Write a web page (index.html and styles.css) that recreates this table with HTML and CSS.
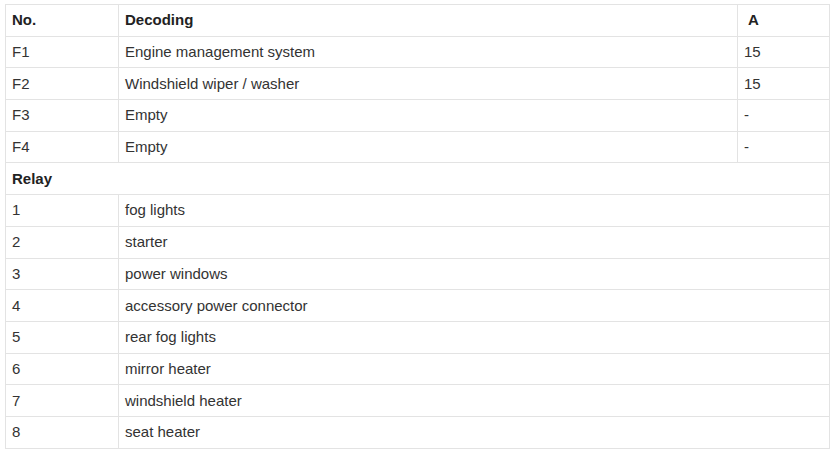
FILE: index.html
```html
<!DOCTYPE html>
<html>
<head>
<meta charset="utf-8">
<link rel="stylesheet" href="styles.css">
</head>
<body>
<table class="fuse-table">
  <colgroup>
    <col class="c-no">
    <col class="c-dec">
    <col class="c-a">
  </colgroup>
  <tr class="head"><td>No.</td><td>Decoding</td><td class="amp-head">A</td></tr>
  <tr><td>F1</td><td>Engine management system</td><td>15</td></tr>
  <tr><td>F2</td><td>Windshield wiper / washer</td><td>15</td></tr>
  <tr><td>F3</td><td>Empty</td><td>-</td></tr>
  <tr><td>F4</td><td>Empty</td><td>-</td></tr>
  <tr class="head"><td colspan="3">Relay</td></tr>
  <tr><td>1</td><td colspan="2">fog lights</td></tr>
  <tr><td>2</td><td colspan="2">starter</td></tr>
  <tr><td>3</td><td colspan="2">power windows</td></tr>
  <tr><td>4</td><td colspan="2">accessory power connector</td></tr>
  <tr><td>5</td><td colspan="2">rear fog lights</td></tr>
  <tr><td>6</td><td colspan="2">mirror heater</td></tr>
  <tr><td>7</td><td colspan="2">windshield heater</td></tr>
  <tr><td>8</td><td colspan="2">seat heater</td></tr>
</table>
</body>
</html>
```

FILE: styles.css
```css
html, body {
  margin: 0;
  padding: 0;
  background: #ffffff;
}
body {
  padding: 4px 0 0 5px;
  font-family: "Liberation Sans", Arial, sans-serif;
  font-size: 15px;
  color: #333333;
}
.fuse-table {
  border-collapse: collapse;
  width: 824px;
  table-layout: fixed;
}
.c-no { width: 113px; }
.c-dec { width: 619px; }
.c-a { width: 92px; }
.fuse-table td {
  border: 1px solid #e3e3e3;
  padding: 5.35px 6px;
  line-height: 20px;
  height: 20px;
  vertical-align: middle;
}
.fuse-table .head td {
  font-weight: bold;
  color: #222222;
}
.fuse-table .amp-head {
  padding-left: 10px;
}
```
